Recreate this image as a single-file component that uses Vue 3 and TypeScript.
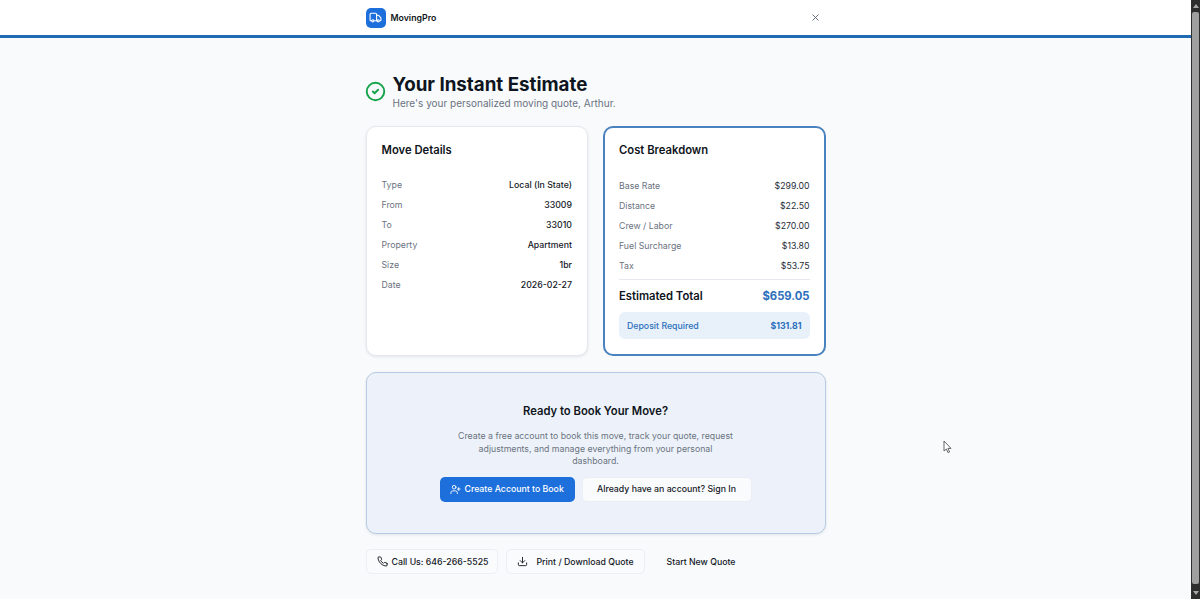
<script setup lang="ts">
const details = [
  ["Type", "Local (In State)"],
  ["From", "33009"],
  ["To", "33010"],
  ["Property", "Apartment"],
  ["Size", "1br"],
  ["Date", "2026-02-27"],
];
const costs = [
  ["Base Rate", "$299.00"],
  ["Distance", "$22.50"],
  ["Crew / Labor", "$270.00"],
  ["Fuel Surcharge", "$13.80"],
  ["Tax", "$53.75"],
];
</script>

<template>
  <div class="page">
    <div class="main">
      <header class="top">
        <div class="top-in">
          <div class="brand">
            <span class="logo">
              <svg width="13" height="13" viewBox="0 0 24 24" fill="none" stroke="#fff" stroke-width="2" stroke-linecap="round" stroke-linejoin="round">
                <path d="M14 18V6a2 2 0 0 0-2-2H4a2 2 0 0 0-2 2v11a1 1 0 0 0 1 1h2" />
                <path d="M15 18H9" />
                <path d="M19 18h2a1 1 0 0 0 1-1v-3.65a1 1 0 0 0-.22-.62l-3.48-4.35A1 1 0 0 0 17.52 8H14" />
                <circle cx="17" cy="18" r="2" />
                <circle cx="7" cy="18" r="2" />
              </svg>
            </span>
            <span class="brand-name">MovingPro</span>
          </div>
          <svg class="close" width="11" height="11" viewBox="0 0 24 24" fill="none" stroke="#5b6472" stroke-width="2" stroke-linecap="round">
            <path d="M18 6 6 18" />
            <path d="m6 6 12 12" />
          </svg>
        </div>
      </header>

      <main class="content">
        <div class="heading">
          <svg class="check" width="21" height="21" viewBox="0 0 24 24" fill="none" stroke="#16a34a" stroke-width="2.2" stroke-linecap="round" stroke-linejoin="round">
            <circle cx="12" cy="12" r="10" />
            <path d="m9 12 2 2 4-4" />
          </svg>
          <div>
            <h1>Your Instant Estimate</h1>
            <p>Here's your personalized moving quote, Arthur.</p>
          </div>
        </div>

        <div class="cards">
          <section class="card plain">
            <h2>Move Details</h2>
            <div class="rows">
              <div v-for="d in details" :key="d[0]" class="row">
                <span class="label">{{ d[0] }}</span>
                <span class="val strong">{{ d[1] }}</span>
              </div>
            </div>
          </section>

          <section class="card accent">
            <h2>Cost Breakdown</h2>
            <div class="rows">
              <div v-for="c in costs" :key="c[0]" class="row">
                <span class="label">{{ c[0] }}</span>
                <span class="val">{{ c[1] }}</span>
              </div>
            </div>
            <div class="total">
              <span>Estimated Total</span>
              <span class="amount">$659.05</span>
            </div>
            <div class="deposit">
              <span>Deposit Required</span>
              <b>$131.81</b>
            </div>
          </section>
        </div>

        <section class="cta">
          <h3>Ready to Book Your Move?</h3>
          <p>Create a free account to book this move, track your quote, request adjustments, and manage everything from your personal dashboard.</p>
          <div class="cta-btns">
            <button class="btn primary">
              <svg width="11" height="11" viewBox="0 0 24 24" fill="none" stroke="currentColor" stroke-width="2" stroke-linecap="round" stroke-linejoin="round">
                <path d="M16 21v-2a4 4 0 0 0-4-4H6a4 4 0 0 0-4 4v2" />
                <circle cx="9" cy="7" r="4" />
                <path d="M19 8v6" />
                <path d="M22 11h-6" />
              </svg>
              Create Account to Book
            </button>
            <button class="btn outline signin">Already have an account? Sign In</button>
          </div>
        </section>

        <div class="actions">
          <button class="btn outline call">
            <svg width="11" height="11" viewBox="0 0 24 24" fill="none" stroke="currentColor" stroke-width="2" stroke-linecap="round" stroke-linejoin="round">
              <path d="M22 16.92v3a2 2 0 0 1-2.18 2 19.79 19.79 0 0 1-8.63-3.07 19.5 19.5 0 0 1-6-6 19.79 19.79 0 0 1-3.07-8.67A2 2 0 0 1 4.11 2h3a2 2 0 0 1 2 1.72c.13.96.36 1.9.7 2.81a2 2 0 0 1-.45 2.11L8.09 9.91a16 16 0 0 0 6 6l1.27-1.27a2 2 0 0 1 2.11-.45c.91.34 1.85.57 2.81.7A2 2 0 0 1 22 16.92z" />
            </svg>
            Call Us: 646-266-5525
          </button>
          <button class="btn outline print">
            <svg width="11" height="11" viewBox="0 0 24 24" fill="none" stroke="currentColor" stroke-width="2" stroke-linecap="round" stroke-linejoin="round">
              <path d="M21 15v4a2 2 0 0 1-2 2H5a2 2 0 0 1-2-2v-4" />
              <path d="m7 10 5 5 5-5" />
              <path d="M12 15V3" />
            </svg>
            Print / Download Quote
          </button>
          <button class="btn ghost">Start New Quote</button>
        </div>
      </main>
    </div>

    <div class="scrollbar">
      <span class="arrow up"></span>
      <span class="thumb"></span>
      <span class="arrow down"></span>
    </div>

    <svg class="cursor" width="10" height="14" viewBox="0 0 10 14">
      <path d="M1 1v10l2.4-2 1.6 3.6 1.6-.7L4.900 8.400H8z" fill="#fff" stroke="#555" stroke-width="0.9" stroke-linejoin="round" />
    </svg>
  </div>
</template>

<style>
html,
body {
  margin: 0;
  overflow: hidden;
}
</style>

<style scoped>
.page {
  position: relative;
  display: flex;
  height: 599px;
  overflow: hidden;
  background: #f8fafc;
  font-family: Inter, "Noto Sans", sans-serif;
  color: #0f1520;
}

.main {
  flex: 1;
  min-width: 0;
}

.top {
  height: 35px;
  background: #fff;
  border-bottom: 3px solid #1e6ab5;
}

.top-in {
  width: 460px;
  height: 35px;
  margin: 0 auto;
  display: flex;
  align-items: center;
  justify-content: space-between;
}

.brand {
  display: flex;
  align-items: center;
  gap: 5px;
}

.logo {
  width: 20px;
  height: 20px;
  border-radius: 5px;
  background: #1d6fdc;
  display: flex;
  align-items: center;
  justify-content: center;
}

.brand-name {
  font-size: 8.75px;
  font-weight: 600;
}

.close {
  margin-right: 5px;
}

.content {
  width: 460px;
  margin: 0 auto;
  padding-top: 35px;
}

.heading {
  display: flex;
  align-items: center;
  gap: 7px;
  height: 36px;
}

.check {
  margin: 1px 0 0 -1px;
}

h1 {
  margin: 0;
  font-size: 18.75px;
  line-height: 24px;
  font-weight: 700;
}

.heading p {
  margin: 0;
  font-size: 10px;
  line-height: 13px;
  color: #6b7280;
}

.cards {
  display: grid;
  grid-template-columns: 1fr 1fr;
  gap: 15px;
  margin-top: 17px;
}

.card {
  height: 230px;
  box-sizing: border-box;
  background: #fff;
  border-radius: 10px;
}

.plain {
  border: 1px solid #e5e8ee;
  box-shadow: 0 1px 3px rgba(15, 21, 32, 0.1);
  padding: 16px 15px;
}

.accent {
  border: 2px solid #4a82bf;
  padding: 15px 14px;
}

h2 {
  margin: 0;
  font-size: 11.25px;
  line-height: 15px;
  font-weight: 600;
  height: 15px;
}

.rows {
  margin-top: 17px;
}

.accent .rows {
  margin-top: 18px;
}

.row {
  height: 20px;
  display: flex;
  align-items: center;
  justify-content: space-between;
  font-size: 8.75px;
}

.label {
  color: #6b7280;
}

.val {
  color: #262c38;
}

.strong {
  font-weight: 500;
  color: #14181f;
}

.total {
  margin-top: 3px;
  padding-top: 8px;
  border-top: 1px solid #e5e8ee;
  display: flex;
  justify-content: space-between;
  align-items: center;
  font-size: 11.25px;
  font-weight: 600;
  line-height: 16px;
}

.amount {
  font-weight: 700;
  color: #2a6fbb;
}

.deposit {
  margin-top: 8px;
  height: 27px;
  padding: 0 8px;
  border-radius: 6px;
  background: #e8f0fa;
  color: #2a6fbb;
  font-size: 8.75px;
  font-weight: 500;
  display: flex;
  align-items: center;
  justify-content: space-between;
}

.deposit b {
  font-weight: 700;
}

.cta {
  margin-top: 16px;
  height: 162px;
  box-sizing: border-box;
  padding-top: 31px;
  text-align: center;
  background: #edf2fa;
  border: 1px solid #b5cbe6;
  border-radius: 10px;
  box-shadow: 0 1px 3px rgba(15, 21, 32, 0.1);
}

h3 {
  margin: 0;
  font-size: 11.25px;
  line-height: 15px;
  font-weight: 600;
}

.cta p {
  width: 280px;
  margin: 11px auto 0;
  font-size: 8.75px;
  line-height: 12.5px;
  color: #6b7280;
}

.cta-btns {
  display: flex;
  justify-content: center;
  gap: 7px;
  margin-top: 9px;
}

.btn {
  font: inherit;
  font-size: 8.75px;
  font-weight: 500;
  height: 25px;
  border: 0;
  border-radius: 5px;
  display: inline-flex;
  align-items: center;
  white-space: nowrap;
  color: #14181f;
}

.primary {
  width: 135px;
  padding: 0 0 0 10px;
  gap: 4px;
  background: #1d6fdc;
  color: #fff;
}

.outline {
  background: #fafbfd;
  border: 1px solid #ebeef3;
  box-sizing: border-box;
}

.signin {
  width: 170px;
  justify-content: center;
}

.actions {
  display: flex;
  align-items: center;
  gap: 8px;
  margin-top: 15px;
}

.call {
  width: 132px;
  padding-left: 10px;
  gap: 4px;
}

.print {
  width: 139px;
  padding-left: 10px;
  gap: 9px;
}

.ghost {
  background: none;
  padding: 0 14px;
}

.scrollbar {
  width: 9px;
  flex: none;
  background: #2e2e2e;
  display: flex;
  flex-direction: column;
  align-items: center;
  padding: 4px 0;
  box-sizing: border-box;
}

.thumb {
  flex: 1;
  width: 7px;
  margin: 4px 0 7px;
  border-radius: 2px;
  background: #9f9f9f;
}

.arrow {
  width: 0;
  height: 0;
  border-left: 3px solid transparent;
  border-right: 3px solid transparent;
}

.up {
  border-bottom: 4px solid #a8a8a8;
}

.down {
  border-top: 4px solid #a8a8a8;
}

.cursor {
  position: absolute;
  left: 943px;
  top: 440px;
}
</style>
